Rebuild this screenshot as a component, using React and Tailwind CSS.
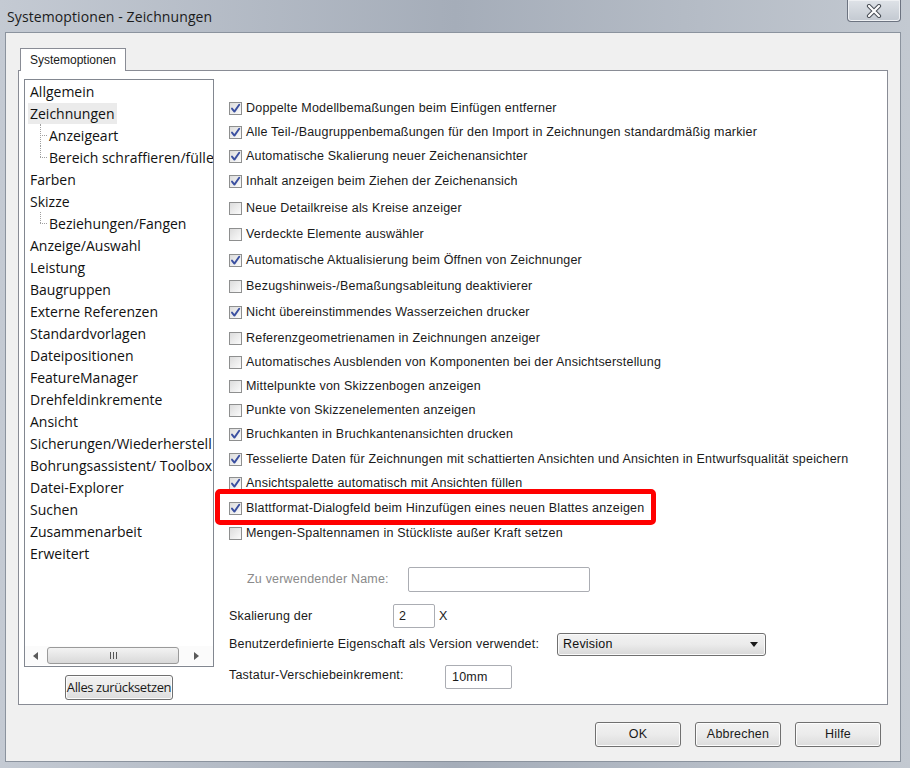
import React from 'react';

const treeItems = [
  { label: 'Allgemein' },
  { label: 'Zeichnungen', selected: true },
  { label: 'Anzeigeart', child: true },
  { label: 'Bereich schraffieren/fülle', child: true, last: true },
  { label: 'Farben' },
  { label: 'Skizze' },
  { label: 'Beziehungen/Fangen', child: true, last: true },
  { label: 'Anzeige/Auswahl' },
  { label: 'Leistung' },
  { label: 'Baugruppen' },
  { label: 'Externe Referenzen' },
  { label: 'Standardvorlagen' },
  { label: 'Dateipositionen' },
  { label: 'FeatureManager' },
  { label: 'Drehfeldinkremente' },
  { label: 'Ansicht' },
  { label: 'Sicherungen/Wiederherstell' },
  { label: 'Bohrungsassistent/ Toolbox' },
  { label: 'Datei-Explorer' },
  { label: 'Suchen' },
  { label: 'Zusammenarbeit' },
  { label: 'Erweitert' },
];

const options = [
  { on: true, mt: '', text: 'Doppelte Modellbemaßungen beim Einfügen entferner' },
  { on: true, mt: 'mt-[4px]', text: 'Alle Teil-/Baugruppenbemaßungen für den Import in Zeichnungen standardmäßig markier' },
  { on: true, mt: 'mt-[4px]', text: 'Automatische Skalierung neuer Zeichenansichter' },
  { on: true, mt: 'mt-[5px]', text: 'Inhalt anzeigen beim Ziehen der Zeichenansich' },
  { on: false, mt: 'mt-[7px]', text: 'Neue Detailkreise als Kreise anzeiger' },
  { on: false, mt: 'mt-[6px]', text: 'Verdeckte Elemente auswähler' },
  { on: true, mt: 'mt-[6px]', text: 'Automatische Aktualisierung beim Öffnen von Zeichnunger' },
  { on: false, mt: 'mt-[6px]', text: 'Bezugshinweis-/Bemaßungsableitung deaktivierer' },
  { on: true, mt: 'mt-[6px]', text: 'Nicht übereinstimmendes Wasserzeichen drucker' },
  { on: false, mt: 'mt-[6px]', text: 'Referenzgeometrienamen in Zeichnungen anzeiger' },
  { on: false, mt: 'mt-[4px]', text: 'Automatisches Ausblenden von Komponenten bei der Ansichtserstellung' },
  { on: false, mt: 'mt-[4px]', text: 'Mittelpunkte von Skizzenbogen anzeigen' },
  { on: false, mt: 'mt-[4px]', text: 'Punkte von Skizzenelementen anzeigen' },
  { on: true, mt: 'mt-[4px]', text: 'Bruchkanten in Bruchkantenansichten drucken' },
  { on: true, mt: 'mt-[5px]', text: 'Tesselierte Daten für Zeichnungen mit schattierten Ansichten und Ansichten in Entwurfsqualität speichern' },
  { on: true, mt: 'mt-[4px]', text: 'Ansichtspalette automatisch mit Ansichten füllen' },
  { on: true, mt: 'mt-[5px]', text: 'Blattformat-Dialogfeld beim Hinzufügen eines neuen Blattes anzeigen', marked: true },
  { on: false, mt: 'mt-[5px]', text: 'Mengen-Spaltennamen in Stückliste außer Kraft setzen' },
];

const Checkbox = ({ on }) => (
  <span className="w-[13px] h-[13px] shrink-0 border border-[#8e8f8f] bg-linear-to-br from-[#dcdcdc] to-[#fbfbfb] flex items-center justify-center">
    {on && (
      <svg width="11" height="11" viewBox="0 0 11 11">
        <path d="M2 5.6 L4.4 8.6 L9.2 1.8" fill="none" stroke="#3a4fa0" strokeWidth="1.9" strokeLinecap="round" strokeLinejoin="round" />
      </svg>
    )}
  </span>
);

const OptionRow = ({ on, mt, text, marked }) => (
  <div className={`relative flex items-center h-[20px] ${mt}`}>
    {marked && (
      <div className="absolute left-[-14px] top-[-9px] w-[441px] h-[36px] border-[5px] border-[#ff0000] rounded-[5px]" />
    )}
    <Checkbox on={on} />
    <span className="ml-[4px] whitespace-nowrap">{text}</span>
  </div>
);

const TreeRow = ({ label, selected, child, last }) => {
  if (child) {
    return (
      <div className="flex h-[22px] items-center">
        <div className="relative w-[22px] h-full shrink-0">
          <div className={`absolute left-[15px] top-0 border-l border-dotted border-[#a0a0a0] ${last ? 'h-[11px]' : 'h-full'}`} />
          <div className="absolute left-[15px] top-[11px] w-[7px] border-t border-dotted border-[#a0a0a0]" />
        </div>
        <span className="pl-[2px] whitespace-nowrap">{label}</span>
      </div>
    );
  }
  return (
    <div className="flex h-[22px] items-center pl-[3px]">
      <span className={`px-[2px] h-[21px] leading-[21px] whitespace-nowrap ${selected ? 'bg-[#ebebeb]' : ''}`}>{label}</span>
    </div>
  );
};

const WinButton = ({ children, className = '' }) => (
  <button className={`h-[25px] border border-[#707070] rounded-[3px] bg-linear-to-b from-[#f2f2f2] via-[#ebebeb] to-[#dcdcdc] text-[#1a1a1a] whitespace-nowrap flex items-center justify-center shadow-[inset_0_0_0_1px_#fcfcfc] ${className}`}>
    {children}
  </button>
);

export default function App() {
  return (
    <div className="w-[910px] h-[768px] overflow-hidden flex flex-col bg-linear-to-r from-[#c4cad3] via-[#a5adb9] to-[#c3c9d1] font-['Liberation_Sans',Arial,sans-serif]">
      {/* title bar */}
      <div className="relative h-[32px] shrink-0 flex items-center pl-[7px]">
        <span className="font-['Open_Sans',sans-serif] text-[14px] text-[#1b1b1b] tracking-[0.1px]">Systemoptionen - Zeichnungen</span>
        <div className="absolute left-[847px] top-0 w-[54px] h-[22px] border border-t-0 border-[#6c7380] rounded-b-[4px] bg-linear-to-b from-[#dfe3e8] to-[#c3c9d1] flex items-center justify-center shadow-[inset_0_0_0_1px_#eef0f3]">
          <svg width="16" height="14" viewBox="0 0 16 14">
            <path d="M3 2 L13 12 M13 2 L3 12" stroke="#4a4f57" strokeWidth="4.2" strokeLinecap="round" />
            <path d="M3 2 L13 12 M13 2 L3 12" stroke="#ffffff" strokeWidth="2.2" strokeLinecap="round" />
          </svg>
        </div>
      </div>

      {/* client area */}
      <div className="flex-1 ml-[5px] mr-[9px] mb-[6px] border border-[#8b939e] bg-[#f0f0f0] flex flex-col">
        <div className="pl-[12px] pt-[15px] mr-[12px]">
          {/* tab */}
          <div className="relative z-10 ml-[2px] w-[106px] h-[23px] bg-white border border-b-0 border-[#898c95] flex items-center justify-center text-[12px] text-[#1a1a1a] -mb-[1px]">
            Systemoptionen
          </div>
          {/* tab panel */}
          <div className="h-[635px] bg-white border border-[#898c95] flex items-start text-[12.5px] tracking-[0.2px] text-[#1a1a1a]">
            {/* left column */}
            <div className="ml-[5px] mt-[8px] w-[190px] flex flex-col items-center tracking-normal">
              <div className="w-[190px] h-[588px] border border-[#828790] flex flex-col font-['Open_Sans',sans-serif] text-[14px] text-[#111]">
                <div className="flex-1 overflow-hidden">
                  {treeItems.map((t) => (
                    <TreeRow key={t.label} {...t} />
                  ))}
                </div>
                {/* horizontal scrollbar */}
                <div className="h-[19px] mb-[1px] flex items-center bg-[#fbfbfb]">
                  <div className="w-[20px] flex justify-center">
                    <svg width="5" height="8" viewBox="0 0 5 8"><path d="M5 0 L0 4 L5 8 Z" fill="#5a5a5a" /></svg>
                  </div>
                  <div className="ml-[2px] w-[132px] h-[17px] rounded-[3px] border border-[#9a9a9a] bg-linear-to-b from-[#f3f3f3] to-[#d9d9d9] flex items-center justify-center gap-[2px]">
                    <span className="w-[1px] h-[7px] bg-[#555]" />
                    <span className="w-[1px] h-[7px] bg-[#555]" />
                    <span className="w-[1px] h-[7px] bg-[#555]" />
                  </div>
                  <div className="flex-1 flex justify-center">
                    <svg width="5" height="8" viewBox="0 0 5 8"><path d="M0 0 L5 4 L0 8 Z" fill="#5a5a5a" /></svg>
                  </div>
                </div>
              </div>
              <WinButton className="mt-[8px] w-[108px] text-[13px] tracking-[-0.4px] font-['Open_Sans',sans-serif]">Alles zurücksetzen</WinButton>
            </div>

            {/* right column */}
            <div className="ml-[15px] pt-[27px] flex flex-col">
              {options.map((o, i) => (
                <OptionRow key={i} {...o} />
              ))}

              <div className="mt-[24px] flex items-center h-[25px]">
                <span className="ml-[18px] w-[161px] text-[#8a8a8a]">Zu verwendender Name:</span>
                <div className="w-[182px] h-[25px] border border-[#abadb3] rounded-[2px] bg-white" />
              </div>

              <div className="mt-[12px] flex items-center h-[24px]">
                <span className="w-[164px]">Skalierung der</span>
                <div className="w-[42px] h-[24px] border border-[#abadb3] rounded-[2px] bg-white flex items-center pl-[5px]">2</div>
                <span className="ml-[4px]">X</span>
              </div>

              <div className="mt-[5px] flex items-center h-[23px]">
                <span className="w-[328px]">Benutzerdefinierte Eigenschaft als Version verwendet:</span>
                <div className="w-[209px] h-[23px] border border-[#707070] rounded-[3px] bg-linear-to-b from-[#f2f2f2] via-[#ebebeb] to-[#d8d8d8] flex items-center justify-between pl-[5px] pr-[7px] shadow-[inset_0_0_0_1px_#fafafa]">
                  <span className="text-[#111]">Revision</span>
                  <svg width="8" height="5" viewBox="0 0 8 5"><path d="M0 0 L8 0 L4 5 Z" fill="#1a1a1a" /></svg>
                </div>
              </div>

              <div className="mt-[9px] flex items-start h-[24px]">
                <span className="w-[216px] mt-[1px]">Tastatur-Verschiebeinkrement:</span>
                <div className="w-[67px] h-[24px] border border-[#abadb3] rounded-[2px] bg-white flex items-center pl-[6px]">10mm</div>
              </div>
            </div>
          </div>
        </div>

        {/* bottom buttons */}
        <div className="mt-[17px] flex justify-end gap-[14px] pr-[19px]">
          <WinButton className="w-[86px] text-[12.5px] tracking-[0.2px]">OK</WinButton>
          <WinButton className="w-[86px] text-[12.5px] tracking-[0.2px]">Abbrechen</WinButton>
          <WinButton className="w-[86px] text-[12.5px] tracking-[0.2px]">Hilfe</WinButton>
        </div>
      </div>
    </div>
  );
}
